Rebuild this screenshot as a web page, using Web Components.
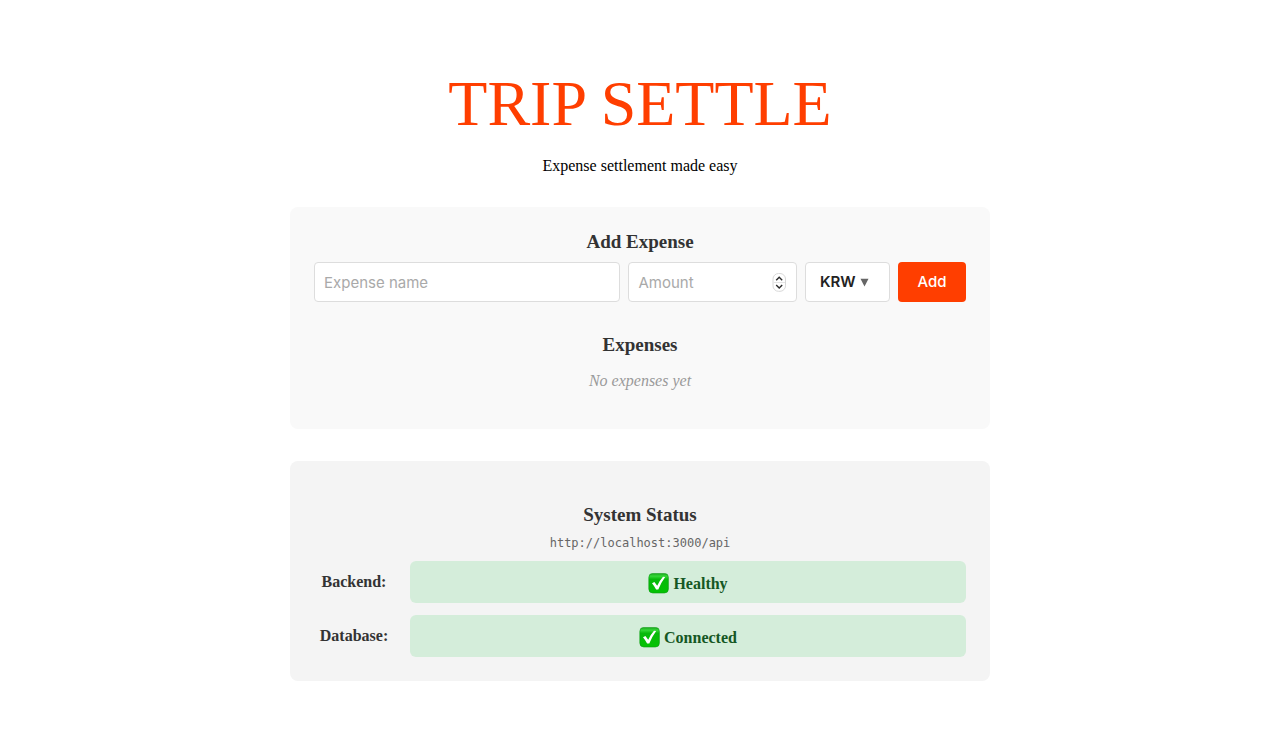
<!DOCTYPE html>
<html lang="en">
<head>
<meta charset="utf-8">
<meta name="viewport" content="width=device-width, initial-scale=1">
<title>Trip Settle</title>
<style>
  body { margin: 0; background: #fff; color: #000; font: 16px/18px "Liberation Serif", "Times New Roman", serif; }
</style>
</head>
<body>
<trip-app></trip-app>

<template id="trip-app">
  <style>
    :host { display: block; text-align: center; padding: 67px 16px 56px; }
    main { max-width: 700px; margin: 0 auto; }
    h1 { margin: 0 0 17px; font-size: 64px; line-height: 73px; font-weight: 400; color: #ff3e00; }
    p { margin: 0 0 32px; }
    .cards { display: grid; gap: 32px; }
  </style>
  <main>
    <h1>TRIP SETTLE</h1>
    <p>Expense settlement made easy</p>
    <div class="cards">
      <expense-card></expense-card>
      <status-card url="http://localhost:3000/api">
        <status-row label="Backend:">Healthy</status-row>
        <status-row label="Database:">Connected</status-row>
      </status-card>
    </div>
  </main>
</template>

<template id="expense-card">
  <style>
    :host { display: block; padding: 24px 24px 23px; border-radius: 8px; background: #f9f9f9; }
    h3 { margin: 0; font-size: 19px; line-height: 22px; color: #333; }
    expense-form { margin: 9px 0 32px; }
    p { margin: 16px 0; color: #999; font-style: italic; }
  </style>
  <h3>Add Expense</h3>
  <expense-form></expense-form>
  <h3>Expenses</h3>
  <p>No expenses yet</p>
</template>

<template id="expense-form">
  <style>
    :host { display: block; }
    * { box-sizing: border-box; }
    form { display: grid; grid-template-columns: minmax(0, 20fr) minmax(0, 11fr) 85px 68px; gap: 8px; }
    input, select, button {
      width: 100%; height: 40px; margin: 0; border: 1px solid #ddd; border-radius: 4px;
      background: #fff; color: #222; font: 15px/20px Inter, Roboto, sans-serif;
    }
    input { padding: 0 9px; appearance: textfield; }
    input::placeholder { color: #a9a9a9; opacity: 1; }
    input::-webkit-inner-spin-button { appearance: none; margin: 0; }
    .field { position: relative; }
    .field svg { position: absolute; pointer-events: none; }
    .spin { right: 11px; top: 11px; }
    .arrow { right: 21px; top: 16px; }
    select { appearance: none; padding: 0 14px; font-weight: 600; }
    button { border: 0; padding: 0; background: #ff3e00; color: #fff; font-weight: 500; }
  </style>
  <form>
    <div class="field"><input type="text" aria-label="Expense name" placeholder="Expense name"></div>
    <div class="field">
      <input type="number" aria-label="Amount" placeholder="Amount">
      <svg class="spin" width="14" height="19" viewBox="0 0 14 19" fill="none" aria-hidden="true">
        <rect x="1" y=".5" width="12.5" height="17.8" rx="5.5" fill="#fff" stroke="#d8d8d8"/>
        <path d="M1.5 9.5h11.5" stroke="#e4e4e4"/>
        <path d="M4.2 7.3 7.2 4.3l3 3M4.2 11.9 7.2 14.9l3-3" stroke="#2c2c2c" stroke-width="1.4"/>
      </svg>
    </div>
    <div class="field">
      <select aria-label="Currency"><option>KRW</option><option>USD</option><option>JPY</option><option>EUR</option></select>
      <svg class="arrow" width="9" height="9" viewBox="0 0 9 9" aria-hidden="true"><path d="M.5.7h8L4.5 8.6z" fill="#666"/></svg>
    </div>
    <button type="button">Add</button>
  </form>
</template>

<template id="status-card">
  <style>
    :host { display: block; padding: 43px 24px 24px; border-radius: 8px; background: #f4f4f4; }
    h3 { margin: 0; font-size: 19px; line-height: 22px; color: #333; }
    p { margin: 9px 0 10px; font: 12px/16px "DejaVu Sans Mono", monospace; color: #666; }
    .rows { display: grid; gap: 12px; }
  </style>
  <h3>System Status</h3>
  <p></p>
  <div class="rows"><slot></slot></div>
</template>

<template id="status-row">
  <style>
    :host { display: grid; grid-template-columns: 80px minmax(0, 1fr); gap: 16px; align-items: center; font-weight: 700; }
    .label { color: #333; }
    .value { display: flex; justify-content: center; align-items: end; gap: 4px; padding: 12px 12px 9px; border-radius: 6px; background: #d4edda; color: #155724; line-height: 21px; }
  </style>
  <span class="label"></span>
  <div class="value">
    <svg width="21" height="21" viewBox="0 0 21 21" role="img" aria-label="OK">
      <defs><linearGradient id="g" x2="0" y2="1"><stop stop-color="#19a51d"/><stop offset=".14" stop-color="#35d837"/><stop offset=".3" stop-color="#08b90b"/><stop offset="1" stop-color="#03c303"/></linearGradient></defs>
      <rect x=".8" y=".4" width="19.6" height="19.6" rx="4" fill="url(#g)" stroke="#0b9c12" stroke-width=".6"/>
      <path d="M4 10.2 6.4 9 9.2 12.8Q11.6 7.6 15 3.8L17.2 3.9Q13.1 9.4 10.3 16.4H8.1Q6.4 13.2 4 10.2Z" fill="#fff"/>
    </svg>
    <slot></slot>
  </div>
</template>

<script>
  class TemplateElement extends HTMLElement {
    constructor() {
      super();
      const template = document.getElementById(this.localName);
      this.attachShadow({ mode: "open" }).append(template.content.cloneNode(true));
    }
  }
  customElements.define("status-row", class extends TemplateElement {
    connectedCallback() { this.shadowRoot.querySelector(".label").textContent = this.getAttribute("label"); }
  });
  customElements.define("status-card", class extends TemplateElement {
    connectedCallback() { this.shadowRoot.querySelector("p").textContent = this.getAttribute("url"); }
  });
  customElements.define("expense-form", class extends TemplateElement {});
  customElements.define("expense-card", class extends TemplateElement {});
  customElements.define("trip-app", class extends TemplateElement {});
</script>
</body>
</html>
